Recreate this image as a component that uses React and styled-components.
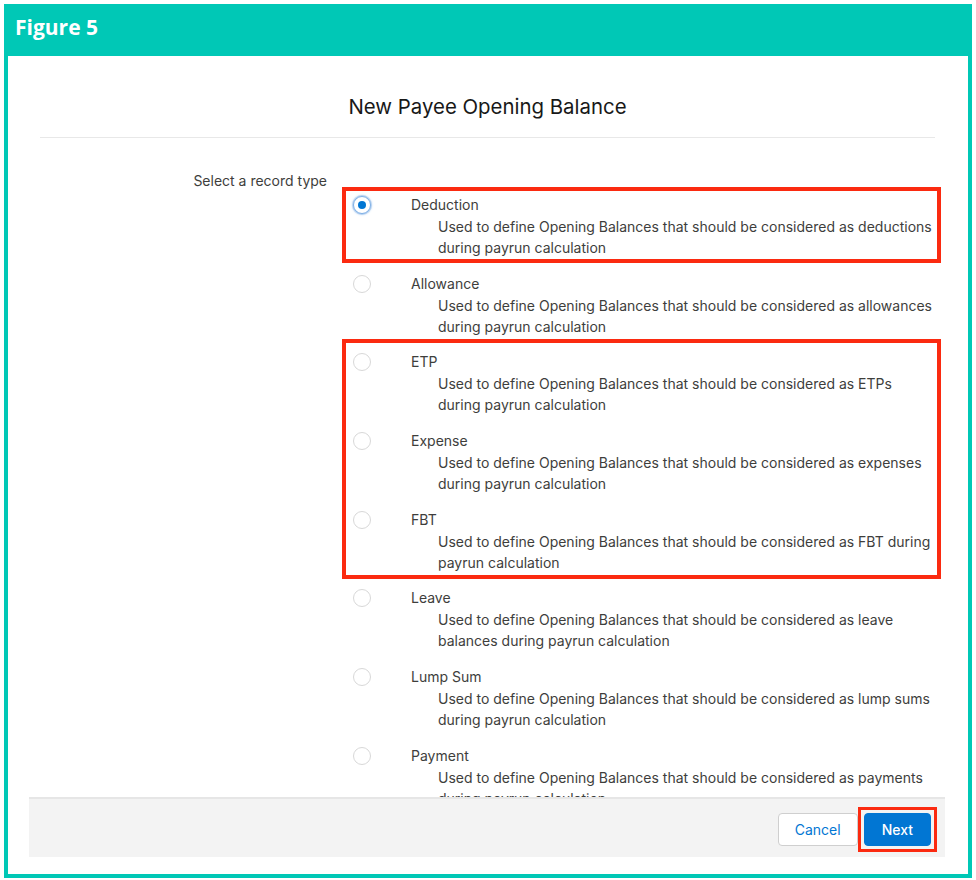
import React from 'react'
import styled, { createGlobalStyle } from 'styled-components'

const GlobalStyle = createGlobalStyle`
  html, body {
    margin: 0;
    padding: 0;
    background: #ffffff;
  }
  * {
    box-sizing: border-box;
  }
`

const Frame = styled.div`
  margin: 4px;
  width: 968px;
  height: 874px;
  border: 4px solid #00c8b6;
  border-top: none;
  display: flex;
  flex-direction: column;
  background: #ffffff;
  font-family: Inter, 'Liberation Sans', sans-serif;
`

const FigureBar = styled.header`
  height: 52px;
  flex: none;
  background: #00c8b6;
  color: #ffffff;
  font-family: 'Open Sans', Inter, sans-serif;
  font-weight: 700;
  font-size: 21px;
  line-height: 24px;
  padding: 11px 7px 0;
  margin: 0 -4px;
  padding-left: 11px;
`

const Body = styled.div`
  flex: 1;
  min-height: 0;
  display: flex;
  flex-direction: column;
  padding: 0 23px 17px 21px;
`

const Modal = styled.section`
  flex: 1;
  min-height: 0;
  display: flex;
  flex-direction: column;
`

const TitleBar = styled.div`
  flex: none;
  margin: 0 10px 0 11px;
  padding: 37px 0 16px;
  border-bottom: 1px solid #e8e8e8;
  text-align: center;
`

const Title = styled.h2`
  margin: 0;
  font-weight: 400;
  font-size: 20.4px;
  line-height: 28px;
  color: #181818;
`

const ScrollArea = styled.div`
  flex: 1;
  min-height: 0;
  overflow: hidden;
`

const FormRow = styled.div`
  display: grid;
  grid-template-columns: 313px 1fr;
  padding-top: 32px;
  color: #3e3e3c;
  font-size: 14px;
`

const FieldLabel = styled.div`
  text-align: right;
  padding-right: 15px;
  line-height: 22px;
`

const Options = styled.div`
  padding-top: 24px;
  display: flex;
  flex-direction: column;
  gap: 14.7px;
`

const Group = styled.div`
  position: relative;
  display: flex;
  flex-direction: column;
  gap: 14.7px;

  &::after {
    content: '';
    position: absolute;
    left: 0;
    right: 4px;
    top: ${({ $top }) => $top}px;
    bottom: ${({ $bottom }) => $bottom}px;
    border: 4px solid #fb2a10;
    pointer-events: none;
  }
`

const Option = styled.label`
  display: flex;
  align-items: flex-start;
  padding-left: 11px;
  gap: 40px;
`

const Radio = styled.span`
  flex: none;
  width: 18px;
  height: 18px;
  margin-top: 2px;
  border-radius: 50%;
  background: #ffffff;
  border: 1px solid ${({ $checked }) => ($checked ? '#7fb0e6' : '#d8d8d8')};
  box-shadow: ${({ $checked }) => ($checked ? '0 0 0 1px #b9d3f1, 0 0 3px #8db8ea' : 'none')};
  display: flex;
  align-items: center;
  justify-content: center;

  &::after {
    content: '';
    width: 8px;
    height: 8px;
    border-radius: 50%;
    background: ${({ $checked }) => ($checked ? '#0176d3' : 'transparent')};
  }
`

const OptionText = styled.div`
  display: flex;
  flex-direction: column;
`

const OptionName = styled.span`
  line-height: 22px;
`

const OptionDesc = styled.div`
  margin-left: 27px;
  line-height: 21px;
  white-space: nowrap;
`

const Footer = styled.footer`
  flex: none;
  height: 60px;
  background: #f3f3f3;
  border-top: 2px solid #e6e6e6;
  display: flex;
  justify-content: flex-end;
  align-items: center;
  padding: 8px 8px 5px;
`

const Mark = styled.span`
  display: flex;
  padding: 3px;
  border: 3px solid #fb2a10;
`

const Button = styled.button`
  height: 33px;
  padding: 0 ${({ $primary }) => ($primary ? 17 : 16)}px;
  border-radius: 4px;
  font-family: Inter, 'Liberation Sans', sans-serif;
  font-size: 14px;
  font-weight: ${({ $primary }) => ($primary ? 500 : 400)};
  cursor: pointer;
  background: ${({ $primary }) => ($primary ? '#0176d3' : '#ffffff')};
  color: ${({ $primary }) => ($primary ? '#ffffff' : '#0176d3')};
  border: 1px solid ${({ $primary }) => ($primary ? '#0176d3' : '#cfcfcf')};
`

const DESC = 'Used to define Opening Balances that should be considered as'

const GROUPS = [
  {
    mark: { top: -7, bottom: -5 },
    items: [
      { name: 'Deduction', lines: [`${DESC} deductions`, 'during payrun calculation'], checked: true },
    ],
  },
  {
    items: [
      { name: 'Allowance', lines: [`${DESC} allowances`, 'during payrun calculation'] },
    ],
  },
  {
    mark: { top: -12, bottom: -6 },
    items: [
      { name: 'ETP', lines: [`${DESC} ETPs`, 'during payrun calculation'] },
      { name: 'Expense', lines: [`${DESC} expenses`, 'during payrun calculation'] },
      { name: 'FBT', lines: [`${DESC} FBT during`, 'payrun calculation'] },
    ],
  },
  {
    items: [
      { name: 'Leave', lines: [`${DESC} leave`, 'balances during payrun calculation'] },
      { name: 'Lump Sum', lines: [`${DESC} lump sums`, 'during payrun calculation'] },
      { name: 'Payment', lines: [`${DESC} payments`, 'during payrun calculation'] },
    ],
  },
]

const OptionItem = ({ name, lines, checked }) => (
  <Option>
    <Radio $checked={checked} />
    <OptionText>
      <OptionName>{name}</OptionName>
      {lines.map((line) => (
        <OptionDesc key={line}>{line}</OptionDesc>
      ))}
    </OptionText>
  </Option>
)

export default function App() {
  return (
    <>
      <GlobalStyle />
      <Frame>
        <FigureBar>Figure 5</FigureBar>
        <Body>
          <Modal>
            <TitleBar>
              <Title>New Payee Opening Balance</Title>
            </TitleBar>
            <ScrollArea>
              <FormRow>
                <FieldLabel>Select a record type</FieldLabel>
                <Options>
                  {GROUPS.map((group, index) =>
                    group.mark ? (
                      <Group key={index} $top={group.mark.top} $bottom={group.mark.bottom}>
                        {group.items.map((item) => (
                          <OptionItem key={item.name} {...item} />
                        ))}
                      </Group>
                    ) : (
                      group.items.map((item) => <OptionItem key={item.name} {...item} />)
                    )
                  )}
                </Options>
              </FormRow>
            </ScrollArea>
            <Footer>
              <Button>Cancel</Button>
              <Mark>
                <Button $primary>Next</Button>
              </Mark>
            </Footer>
          </Modal>
        </Body>
      </Frame>
    </>
  )
}
